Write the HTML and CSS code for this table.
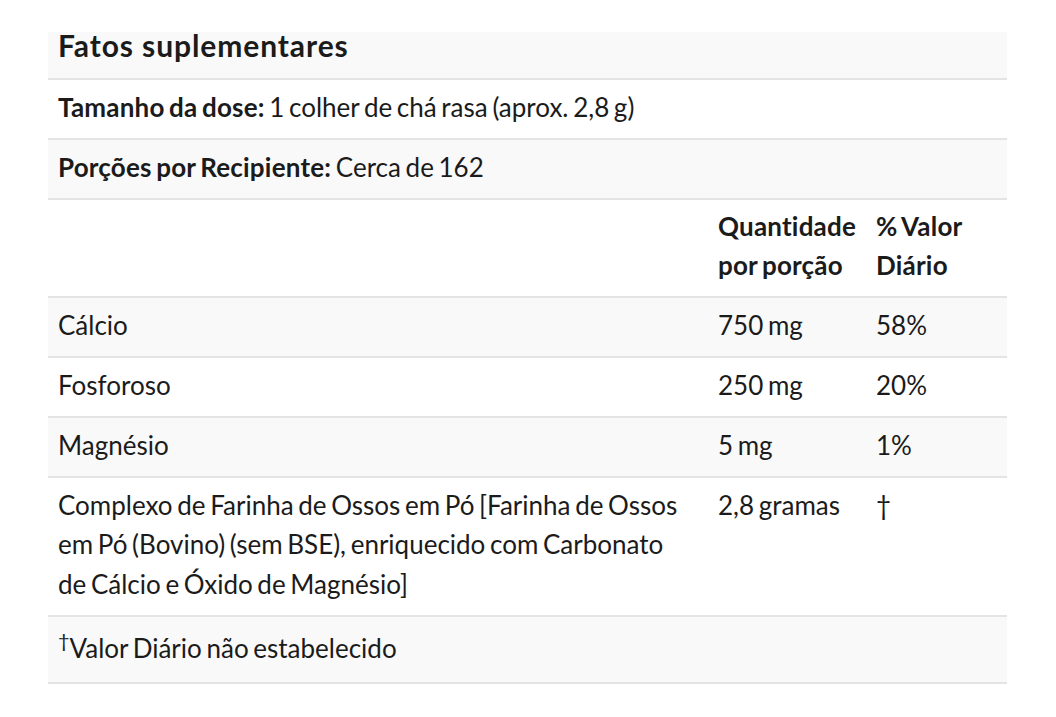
FILE: index.html
```html
<!DOCTYPE html>
<html lang="pt">
<head>
<meta charset="utf-8">
<title>Fatos suplementares</title>
<link rel="stylesheet" href="styles.css">
</head>
<body>
<table class="facts">
  <colgroup>
    <col class="c-name">
    <col class="c-qty">
    <col class="c-dv">
  </colgroup>
  <tbody>
    <tr class="shade title-row"><td colspan="3" class="title">Fatos suplementares</td></tr>
    <tr><td colspan="3"><b>Tamanho da dose:</b> 1 colher de chá rasa (aprox. 2,8 g)</td></tr>
    <tr class="shade"><td colspan="3"><b>Porções por Recipiente:</b> Cerca de 162</td></tr>
    <tr class="head"><td></td><td><b>Quantidade por porção</b></td><td><b>% Valor Diário</b></td></tr>
    <tr class="shade"><td>Cálcio</td><td>750 mg</td><td>58%</td></tr>
    <tr><td>Fosforoso</td><td>250 mg</td><td>20%</td></tr>
    <tr class="shade"><td>Magnésio</td><td>5 mg</td><td>1%</td></tr>
    <tr><td class="name">Complexo de Farinha de Ossos em Pó [Farinha de Ossos em Pó (Bovino) (sem BSE), enriquecido com Carbonato de Cálcio e Óxido de Magnésio]</td><td>2,8 gramas</td><td>†</td></tr>
    <tr class="shade foot"><td colspan="3"><sup class="dagger">†</sup>Valor Diário não estabelecido</td></tr>
  </tbody>
</table>
</body>
</html>
```

FILE: styles.css
```css
html, body {
  margin: 0;
  padding: 0;
  background: #ffffff;
}
body {
  padding: 32px 49px 0 48px;
  font-family: Lato, "Open Sans", sans-serif;
  color: #1b1b1b;
}
.facts {
  width: 959px;
  border-collapse: collapse;
  table-layout: fixed;
  font-size: 26px;
  line-height: 39.8px;
  word-spacing: -2px;
}
.c-name { width: 660px; }
.c-qty { width: 158px; }
.c-dv { width: 141px; }
.facts td {
  padding: 8px 10px 10px 10px;
  vertical-align: top;
  border-bottom: 2px solid #e4e4e4;
}
.facts td.name {
  padding-right: 24px;
}
.facts tr.shade td {
  background: #f9f9f9;
}
.facts b {
  font-weight: 700;
  letter-spacing: 0.2px;
}
.facts td.title {
  font-size: 30px;
  font-weight: 700;
  letter-spacing: 0.9px;
  word-spacing: 0;
  line-height: 26px;
  padding-top: 0;
  padding-bottom: 20px;
}
.head td {
  padding-top: 7px;
  padding-bottom: 10px;
}
.foot td {
  padding-top: 12px;
  padding-bottom: 13px;
}
.dagger {
  font-size: 20px;
  line-height: 0;
  vertical-align: 10px;
}
```
